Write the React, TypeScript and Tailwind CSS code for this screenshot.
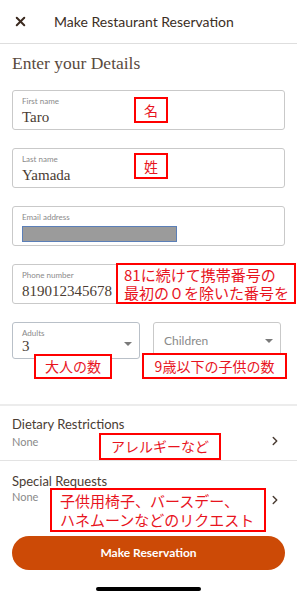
import { ChevronRight, X } from "lucide-react";

const sans = "font-['Lato','Noto_Sans',sans-serif]";
const serif = "font-['Liberation_Serif','DejaVu_Serif',serif]";
const jp = "font-['Noto_Sans_CJK_JP',sans-serif]";

const Note: React.FC<{ className: string; children: React.ReactNode }> = ({ className, children }) => (
    <div className={`absolute border-2 border-[#ff0000] bg-white text-[#e8141e] ${jp} ${className}`}>
        {children}
    </div>
);

const Field: React.FC<{ label: string; children?: React.ReactNode; className?: string }> = ({ label, children, className = "" }) => (
    <div className={`h-[40px] rounded-[3px] border border-[#c9c9c9] px-[9px] pt-[5px] ${className}`}>
        <div className={`text-[8px] leading-[10px] text-[#8a8a8a] ${sans}`}>{label}</div>
        {children}
    </div>
);

const Caret = () => (
    <div className="w-0 h-0 border-l-[4px] border-r-[4px] border-t-[4px] border-l-transparent border-r-transparent border-t-[#7a7a7a]" />
);

export default function App() {
    return (
        <div className={`relative w-[297px] h-[595px] bg-white overflow-hidden ${sans}`}>
            <div className="h-[44px] flex items-center border-b border-[#dedede]">
                <X className="w-[15px] h-[15px] ml-[13px] text-[#3b2a1f]" strokeWidth={3.2} />
                <span className="ml-[26px] text-[14px] text-[#3b2e25]">Make Restaurant Reservation</span>
            </div>

            <h1 className={`ml-[12px] mt-[8px] text-[17.5px] leading-[22px] text-[#5a4a3e] ${serif}`}>Enter your Details</h1>

            <div className="relative px-[12px] mt-[16px] flex flex-col gap-[18px]">
                <Field label="First name">
                    <div className={`mt-[2px] text-[15px] leading-[18px] text-[#4a3c33] ${serif}`}>Taro</div>
                </Field>
                <Field label="Last name">
                    <div className={`mt-[2px] text-[15px] leading-[18px] text-[#4a3c33] ${serif}`}>Yamada</div>
                </Field>
                <Field label="Email address">
                    <div className="mt-[4px] w-[155px] h-[16px] bg-[#9b9b9b] border border-[#5b7fb8]" />
                </Field>
                <Field label="Phone number">
                    <div className={`mt-[2px] text-[15px] leading-[18px] text-[#4a3c33] ${serif}`}>819012345678</div>
                </Field>
                <div className="flex gap-[13px]">
                    <div className="w-[128px] h-[37px] rounded-[3px] border border-[#b9c0c8] pl-[9px] pr-[7px] pt-[5px] flex items-start justify-between">
                        <div>
                            <div className="text-[8px] leading-[10px] text-[#8a8a8a]">Adults</div>
                            <div className={`text-[15px] leading-[16px] text-[#4a3c33] ${serif}`}>3</div>
                        </div>
                        <div className="mt-[14px]"><Caret /></div>
                    </div>
                    <div className="w-[128px] h-[37px] rounded-[3px] border border-[#c9c9c9] pl-[10px] pr-[7px] flex items-center justify-between">
                        <span className="text-[12px] text-[#8a8a8a]">Children</span>
                        <Caret />
                    </div>
                </div>

                <Note className="left-[134px] top-[7px] w-[34px] h-[26px] flex items-center justify-center text-[14px]">名</Note>
                <Note className="left-[134px] top-[63px] w-[34px] h-[26px] flex items-center justify-center text-[14px]">姓</Note>
                <Note className="left-[116px] top-[173px] w-[180px] h-[41px] pl-[6px] text-[15px] leading-[18px] pt-[1px]">
                    81に続けて携帯番号の<br />最初の０を除いた番号を
                </Note>
                <Note className="left-[34px] top-[264px] w-[78px] h-[25px] flex items-center justify-center text-[14px]">大人の数</Note>
                <Note className="left-[142px] top-[263px] w-[145px] h-[26px] flex items-center justify-center text-[14px]">9歳以下の子供の数</Note>
            </div>

            <div className="mt-[45px] border-t-2 border-[#ececec]" />
            <div className="relative h-[55px] px-[12px] pt-[9px] flex justify-between border-b border-[#e3e3e3]">
                <div>
                    <div className="text-[13px] leading-[18px] text-[#4a3c33]">Dietary Restrictions</div>
                    <div className="mt-[2px] text-[11px] leading-[14px] text-[#8a8a8a]">None</div>
                </div>
                <ChevronRight className="mt-[19px] mr-[3px] w-[14px] h-[14px] text-[#4a3c33]" strokeWidth={2.5} />
                <Note className="left-[99px] top-[27px] w-[122px] h-[27px] flex items-center justify-center text-[14px]">アレルギーなど</Note>
            </div>
            <div className="relative h-[74px] px-[12px] pt-[11px] flex justify-between">
                <div>
                    <div className="text-[13px] leading-[18px] text-[#4a3c33]">Special Requests</div>
                    <div className="mt-[0px] text-[11px] leading-[14px] text-[#8a8a8a]">None</div>
                </div>
                <ChevronRight className="mt-[21px] mr-[3px] w-[14px] h-[14px] text-[#4a3c33]" strokeWidth={2.5} />
                <Note className="left-[50px] top-[27px] w-[216px] h-[44px] pl-[8px] pt-[1px] text-[15px] leading-[19px]">
                    子供用椅子、バースデー、<br />ハネムーンなどのリクエスト
                </Note>
            </div>

            <div className="mx-[12px] mt-[1px] h-[34px] rounded-full bg-[#cc4a06] flex items-center justify-center text-white text-[12px] font-bold">
                Make Reservation
            </div>
            <div className="mx-auto mt-[17px] w-[105px] h-[4px] rounded-full bg-black" />
        </div>
    );
}
